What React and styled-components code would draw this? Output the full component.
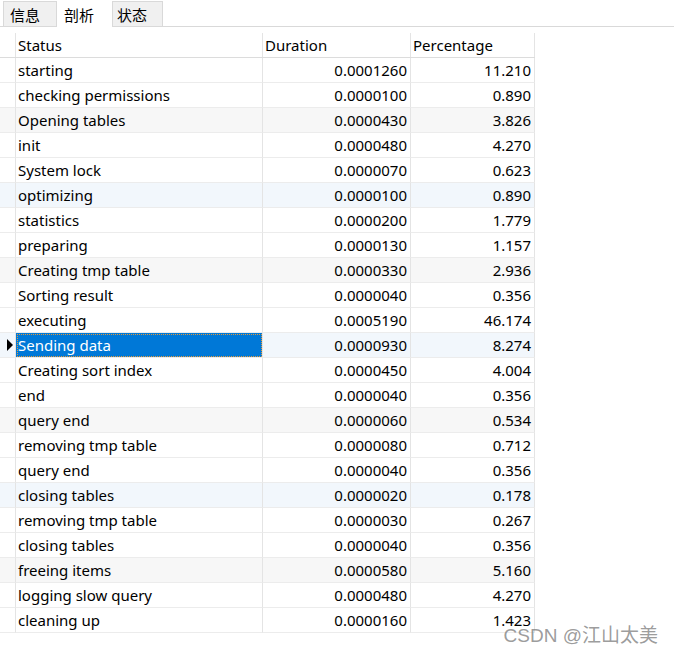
import React from 'react';
import styled, { createGlobalStyle } from 'styled-components';

const GlobalStyle = createGlobalStyle`
  body {
    margin: 0;
    background: #ffffff;
    font-family: "Noto Sans", "Noto Sans CJK SC", sans-serif;
  }
`;

const rows = [
  ['starting', '0.0001260', '11.210'],
  ['checking permissions', '0.0000100', '0.890'],
  ['Opening tables', '0.0000430', '3.826'],
  ['init', '0.0000480', '4.270'],
  ['System lock', '0.0000070', '0.623'],
  ['optimizing', '0.0000100', '0.890'],
  ['statistics', '0.0000200', '1.779'],
  ['preparing', '0.0000130', '1.157'],
  ['Creating tmp table', '0.0000330', '2.936'],
  ['Sorting result', '0.0000040', '0.356'],
  ['executing', '0.0005190', '46.174'],
  ['Sending data', '0.0000930', '8.274'],
  ['Creating sort index', '0.0000450', '4.004'],
  ['end', '0.0000040', '0.356'],
  ['query end', '0.0000060', '0.534'],
  ['removing tmp table', '0.0000080', '0.712'],
  ['query end', '0.0000040', '0.356'],
  ['closing tables', '0.0000020', '0.178'],
  ['removing tmp table', '0.0000030', '0.267'],
  ['closing tables', '0.0000040', '0.356'],
  ['freeing items', '0.0000580', '5.160'],
  ['logging slow query', '0.0000480', '4.270'],
  ['cleaning up', '0.0000160', '1.423'],
];

const SELECTED = 11;

const Page = styled.div`
  position: relative;
  width: 674px;
  height: 653px;
  overflow: hidden;
`;

const TabBar = styled.div`
  display: flex;
  align-items: flex-end;
  height: 26px;
  padding-left: 3px;
  border-bottom: 1px solid #d9d9d9;
`;

const Tab = styled.div`
  box-sizing: border-box;
  width: ${p => p.$w}px;
  height: ${p => (p.$active ? '27px' : '25px')};
  margin-bottom: ${p => (p.$active ? '-1px' : '0')};
  padding-left: ${p => p.$pad}px;
  display: flex;
  align-items: center;
  font-family: "Noto Sans CJK SC", sans-serif;
  font-size: 15px;
  color: #000;
  background: ${p => (p.$active ? '#ffffff' : '#f0f0f0')};
  border: 1px solid ${p => (p.$active ? 'transparent' : '#d9d9d9')};
  border-bottom: none;
`;

const Grid = styled.div`
  margin-top: 6px;
  width: 535px;
`;

const Row = styled.div`
  display: grid;
  grid-template-columns: 16px 247px 148px 124px;
  height: 25px;
  background: ${p => p.$tint || '#ffffff'};
`;

const HeadRow = styled(Row)`
  height: 24px;
  border-bottom: 1px solid #dcdcdc;
`;

const Cell = styled.div`
  box-sizing: border-box;
  display: flex;
  align-items: center;
  justify-content: ${p => (p.$num ? 'flex-end' : 'flex-start')};
  padding: ${p => (p.$num ? '0 3px 0 0' : '0 0 0 2px')};
  font-size: 15px;
  color: #000;
  white-space: nowrap;
  border-right: 1px solid #e4e4e4;
  border-bottom: ${p => (p.$head ? 'none' : '1px solid #ececec')};
`;

const Indicator = styled(Cell)`
  padding: 0 0 0 7px;
`;

const Selected = styled(Cell)`
  background: #0078d7;
  color: #fff;
  outline: 1px dotted #e39a3a;
  outline-offset: -2px;
`;

const Arrow = styled.div`
  width: 0;
  height: 0;
  border-top: 6px solid transparent;
  border-bottom: 6px solid transparent;
  border-left: 6px solid #000;
`;

const Watermark = styled.div`
  position: absolute;
  right: 16px;
  bottom: 6px;
  font-size: 19px;
  color: rgba(130, 130, 130, 0.8);
  font-family: "Liberation Sans", "Noto Sans CJK SC", sans-serif;
`;

function tintFor(i) {
  if (i % 3 !== 2) return null;
  return (i / 3) % 2 < 1 ? '#f7f7f7' : '#f2f7fc';
}

export default function App() {
  return (
    <Page>
      <GlobalStyle />
      <TabBar>
        <Tab $w={54} $pad={6}>信息</Tab>
        <Tab $active $w={55} $pad={6}>剖析</Tab>
        <Tab $w={51} $pad={4}>状态</Tab>
      </TabBar>
      <Grid>
        <HeadRow>
          <Cell $head />
          <Cell $head>Status</Cell>
          <Cell $head>Duration</Cell>
          <Cell $head>Percentage</Cell>
        </HeadRow>
        {rows.map(([status, dur, pct], i) => {
          const StatusCell = i === SELECTED ? Selected : Cell;
          return (
            <Row key={i} $tint={tintFor(i)}>
              <Indicator>{i === SELECTED && <Arrow />}</Indicator>
              <StatusCell>{status}</StatusCell>
              <Cell $num>{dur}</Cell>
              <Cell $num>{pct}</Cell>
            </Row>
          );
        })}
      </Grid>
      <Watermark>CSDN @江山太美</Watermark>
    </Page>
  );
}
